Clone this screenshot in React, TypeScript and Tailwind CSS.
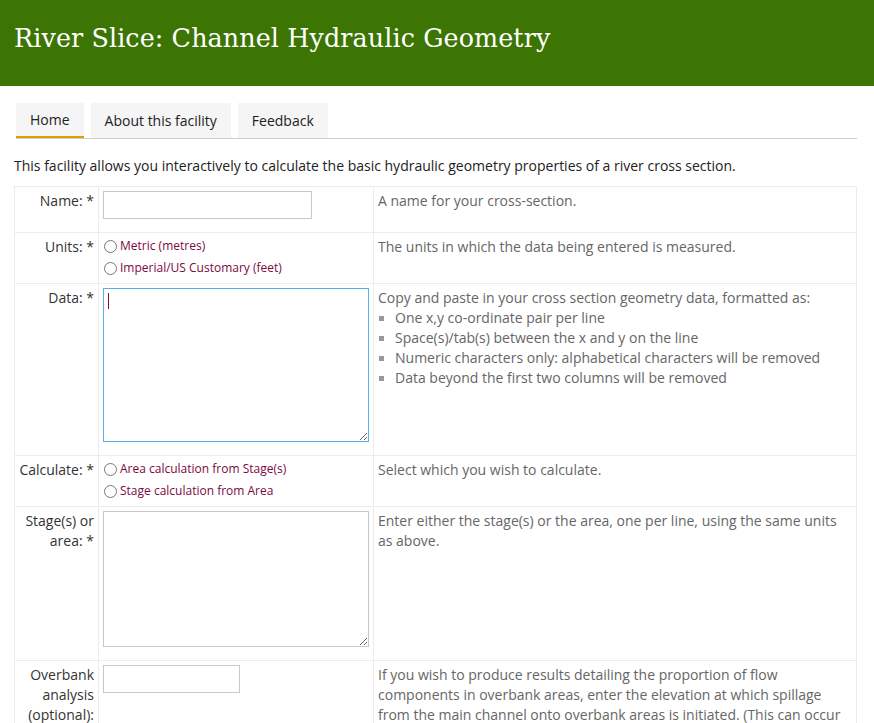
import React from 'react';

const labelCls = 'w-[84px] align-top text-right pr-[4px] pl-[4px] pt-[4px] pb-[5px] text-[#333] leading-[20px] border border-[#ececec]';
const inputCell = 'w-[273px] align-top px-[4px] pt-[4px] pb-[13px] border border-[#ececec]';
const radioCell = 'align-top px-[4px] pt-[2px] pb-[4px] border border-[#ececec]';
const descCls = 'align-top px-[4px] pt-[4px] pb-[5px] text-[#666] leading-[20px] border border-[#ececec]';

const Radio: React.FC<{ label: string }> = ({ label }) => (
  <label className="flex items-center h-[22px] text-[12px] text-[#7b0a3f]">
    <span className="w-[13px] h-[13px] rounded-full border border-[#777] bg-white mr-[3px] ml-[1px]" />
    {label}
  </label>
);

const bullets = [
  'One x,y co-ordinate pair per line',
  'Space(s)/tab(s) between the x and y on the line',
  'Numeric characters only: alphabetical characters will be removed',
  'Data beyond the first two columns will be removed',
];

const App: React.FC = () => {
  return (
    <div className="min-h-screen bg-white text-[14px] text-[#222]" style={{ fontFamily: '"Open Sans", sans-serif' }}>
      {/* Header */}
      <header className="h-[86px] bg-[#3c7504] flex items-center px-[14px] pb-[10px]">
        <h1 className="text-white text-[25.4px] tracking-[0.1px]" style={{ fontFamily: '"DejaVu Serif", serif' }}>
          River Slice: Channel Hydraulic Geometry
        </h1>
      </header>

      {/* Tabs */}
      <nav className="mt-[17px] mx-[16px] w-[841px] flex gap-[7px] border-b border-[#cfcfcf]">
        <span className="h-[35px] px-[14px] bg-[#f5f5f5] flex items-center border-b-2 border-[#d9a000] -mb-px">Home</span>
        <span className="h-[35px] px-[14px] bg-[#f5f5f5] flex items-center">About this facility</span>
        <span className="h-[35px] px-[14px] bg-[#f5f5f5] flex items-center">Feedback</span>
      </nav>

      <p className="mt-[17px] ml-[14px] leading-[20px] text-[#222]">
        This facility allows you interactively to calculate the basic hydraulic geometry properties of a river cross section.
      </p>

      <table className="mt-[10px] ml-[14px] w-[843px] border-collapse">
        <tbody>
          <tr>
            <td className={labelCls}>Name: *</td>
            <td className={inputCell}>
              <input className="block w-[209px] h-[28px] border border-[#c8c8c8] outline-none" />
            </td>
            <td className={descCls}>A name for your cross-section.</td>
          </tr>
          <tr>
            <td className={labelCls}>Units: *</td>
            <td className={radioCell}>
              <Radio label="Metric (metres)" />
              <Radio label="Imperial/US Customary (feet)" />
            </td>
            <td className={descCls}>The units in which the data being entered is measured.</td>
          </tr>
          <tr>
            <td className={labelCls}>Data: *</td>
            <td className={inputCell}>
              <div className="relative">
                <textarea className="block w-[266px] h-[154px] border border-[#5aaeea] outline-none resize" />
                <span className="absolute left-[5px] top-[5px] w-px h-[16px] bg-[#7b0a3f]" />
              </div>
            </td>
            <td className={descCls}>
              Copy and paste in your cross section geometry data, formatted as:
              <ul>
                {bullets.map((b) => (
                  <li key={b} className="flex items-center">
                    <span className="w-[5px] h-[5px] bg-[#999] mr-[11px] ml-[1px]" />
                    {b}
                  </li>
                ))}
              </ul>
            </td>
          </tr>
          <tr>
            <td className={labelCls}>Calculate: *</td>
            <td className={radioCell}>
              <Radio label="Area calculation from Stage(s)" />
              <Radio label="Stage calculation from Area" />
            </td>
            <td className={descCls}>Select which you wish to calculate.</td>
          </tr>
          <tr>
            <td className={labelCls}>Stage(s) or area: *</td>
            <td className={inputCell}>
              <textarea className="block w-[266px] h-[136px] border border-[#c8c8c8] outline-none resize" />
            </td>
            <td className={descCls}>Enter either the stage(s) or the area, one per line, using the same units as above.</td>
          </tr>
          <tr>
            <td className={labelCls}>Overbank analysis (optional):</td>
            <td className={inputCell}>
              <input className="block w-[137px] h-[28px] border border-[#c8c8c8] outline-none" />
            </td>
            <td className={descCls}>
              If you wish to produce results detailing the proportion of flow components in overbank areas, enter the elevation at which spillage from the main channel onto overbank areas is initiated. (This can occur at different elevations on each bank; enter the lower of the two.)
            </td>
          </tr>
        </tbody>
      </table>
    </div>
  );
};

export default App;
